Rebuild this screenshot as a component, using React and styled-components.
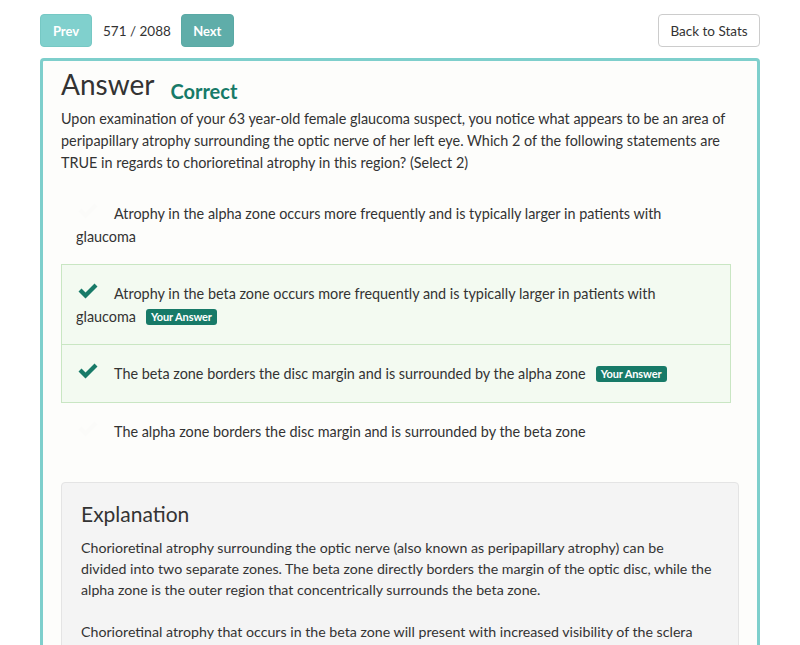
import React from "react";
import styled, { createGlobalStyle } from "styled-components";

const Global = createGlobalStyle`
  html, body { margin: 0; padding: 0; background: #ffffff; }
  body { font-family: Lato, "Open Sans", sans-serif; color: #333; }
  * { box-sizing: border-box; }
`;

const Page = styled.div`
  padding: 14px 40px 0 40px;
  width: 800px;
  height: 645px;
  overflow: hidden;
`;

const TopBar = styled.div`
  display: flex;
  align-items: center;
  height: 33px;
  margin-bottom: 11px;
`;

const NavButton = styled.button`
  height: 33px;
  width: ${(p) => (p.$dark ? "53px" : "52px")};
  padding: 0;
  border: 1px solid ${(p) => (p.$dark ? "#5aa9a5" : "#76c8c4")};
  border-radius: 4px;
  background: ${(p) => (p.$dark ? "#5fada9" : "#80d0cd")};
  color: #fff;
  font-family: Lato, sans-serif;
  font-weight: 700;
  font-size: 13px;
`;

const Counter = styled.span`
  margin: 0 10px 0 11px;
  font-size: 13.5px;
  color: #333;
`;

const Spacer = styled.div`
  flex: 1;
`;

const BackButton = styled.button`
  height: 33px;
  width: 102px;
  padding: 0;
  border: 1px solid #ccc;
  border-radius: 4px;
  background: #fff;
  color: #333;
  font-family: Lato, sans-serif;
  font-size: 13.5px;
`;

const Card = styled.div`
  border: 3px solid #7ecfcc;
  border-radius: 4px;
  background: #fdfdfb;
  padding: 5px 18px 20px 18px;
  min-height: 620px;
`;

const TitleRow = styled.div`
  display: flex;
  align-items: baseline;
  gap: 16px;
`;

const Title = styled.h1`
  margin: 0;
  font-size: 28px;
  font-weight: 400;
  line-height: 36px;
  color: #333;
`;

const Status = styled.span`
  font-size: 20px;
  font-weight: 700;
  color: #177a68;
  position: relative;
  top: 4px;
`;

const Question = styled.p`
  margin: 6px 0 0 0;
  font-size: 14.4px;
  line-height: 22px;
  color: #333;
`;

const Options = styled.div`
  margin: 10px 8px 0 0;
  display: flex;
  flex-direction: column;
`;

const Option = styled.div`
  padding: 17px 16px 16px 14px;
  font-size: 14.4px;
  line-height: 22px;
  color: #333;
  background: ${(p) => (p.$selected ? "#f3faf1" : "transparent")};
  border: 1px solid ${(p) => (p.$selected ? "#c9e6c3" : "transparent")};
  & + & {
    margin-top: ${(p) => (p.$selected ? "-1px" : "0")};
  }
`;

const Check = styled.span`
  display: inline-block;
  width: 22px;
  margin-left: 1px;
  margin-right: 15px;
  vertical-align: -1px;
`;

const Badge = styled.span`
  display: inline-block;
  margin-left: 10px;
  padding: 2px 5px;
  border-radius: 3px;
  background: #177a68;
  color: #fff;
  font-size: 11px;
  font-weight: 700;
  line-height: 12px;
  letter-spacing: -0.1px;
  vertical-align: 1px;
`;

const Explanation = styled.div`
  margin-top: 21px;
  background: #f4f4f4;
  border: 1px solid #e4e4e4;
  border-radius: 4px;
  padding: 16px 19px;
`;

const ExplTitle = styled.h3`
  margin: 0 0 8px 0;
  font-size: 21px;
  font-weight: 400;
  line-height: 30px;
  color: #333;
`;

const ExplText = styled.p`
  margin: 0 0 21px 0;
  font-size: 14.2px;
  line-height: 21px;
  color: #333;
  white-space: nowrap;
`;

const CheckIcon = ({ color }) => (
  <svg width="22" height="18" viewBox="0 0 22 18">
    <path d="M1.5 9.5 L4.5 6.5 L8.5 10.5 L17.5 1.5 L20.5 4.5 L8.5 16.5 Z" fill={color} />
  </svg>
);

const options = [
  { text: "Atrophy in the alpha zone occurs more frequently and is typically larger in patients with glaucoma", selected: false },
  { text: "Atrophy in the beta zone occurs more frequently and is typically larger in patients with glaucoma", selected: true },
  { text: "The beta zone borders the disc margin and is surrounded by the alpha zone", selected: true },
  { text: "The alpha zone borders the disc margin and is surrounded by the beta zone", selected: false },
];

export default function App() {
  return (
    <>
      <Global />
      <Page>
        <TopBar>
          <NavButton>Prev</NavButton>
          <Counter>571 / 2088</Counter>
          <NavButton $dark>Next</NavButton>
          <Spacer />
          <BackButton>Back to Stats</BackButton>
        </TopBar>
        <Card>
          <TitleRow>
            <Title>Answer</Title>
            <Status>Correct</Status>
          </TitleRow>
          <Question>
            Upon examination of your 63 year-old female glaucoma suspect, you notice what appears to be an area of
            peripapillary atrophy surrounding the optic nerve of her left eye. Which 2 of the following statements are
            TRUE in regards to chorioretinal atrophy in this region? (Select 2)
          </Question>
          <Options>
            {options.map((o, i) => (
              <Option key={i} $selected={o.selected}>
                <Check>
                  <CheckIcon color={o.selected ? "#177a68" : "#fbfbf9"} />
                </Check>
                {o.text}
                {o.selected && <Badge>Your Answer</Badge>}
              </Option>
            ))}
          </Options>
          <Explanation>
            <ExplTitle>Explanation</ExplTitle>
            <ExplText>
              Chorioretinal atrophy surrounding the optic nerve (also known as peripapillary atrophy) can be
              <br />
              divided into two separate zones. The beta zone directly borders the margin of the optic disc, while the
              <br />
              alpha zone is the outer region that concentrically surrounds the beta zone.
            </ExplText>
            <ExplText>
              Chorioretinal atrophy that occurs in the beta zone will present with increased visibility of the sclera
              <br />
              and choroidal vessels.
            </ExplText>
          </Explanation>
        </Card>
      </Page>
    </>
  );
}
